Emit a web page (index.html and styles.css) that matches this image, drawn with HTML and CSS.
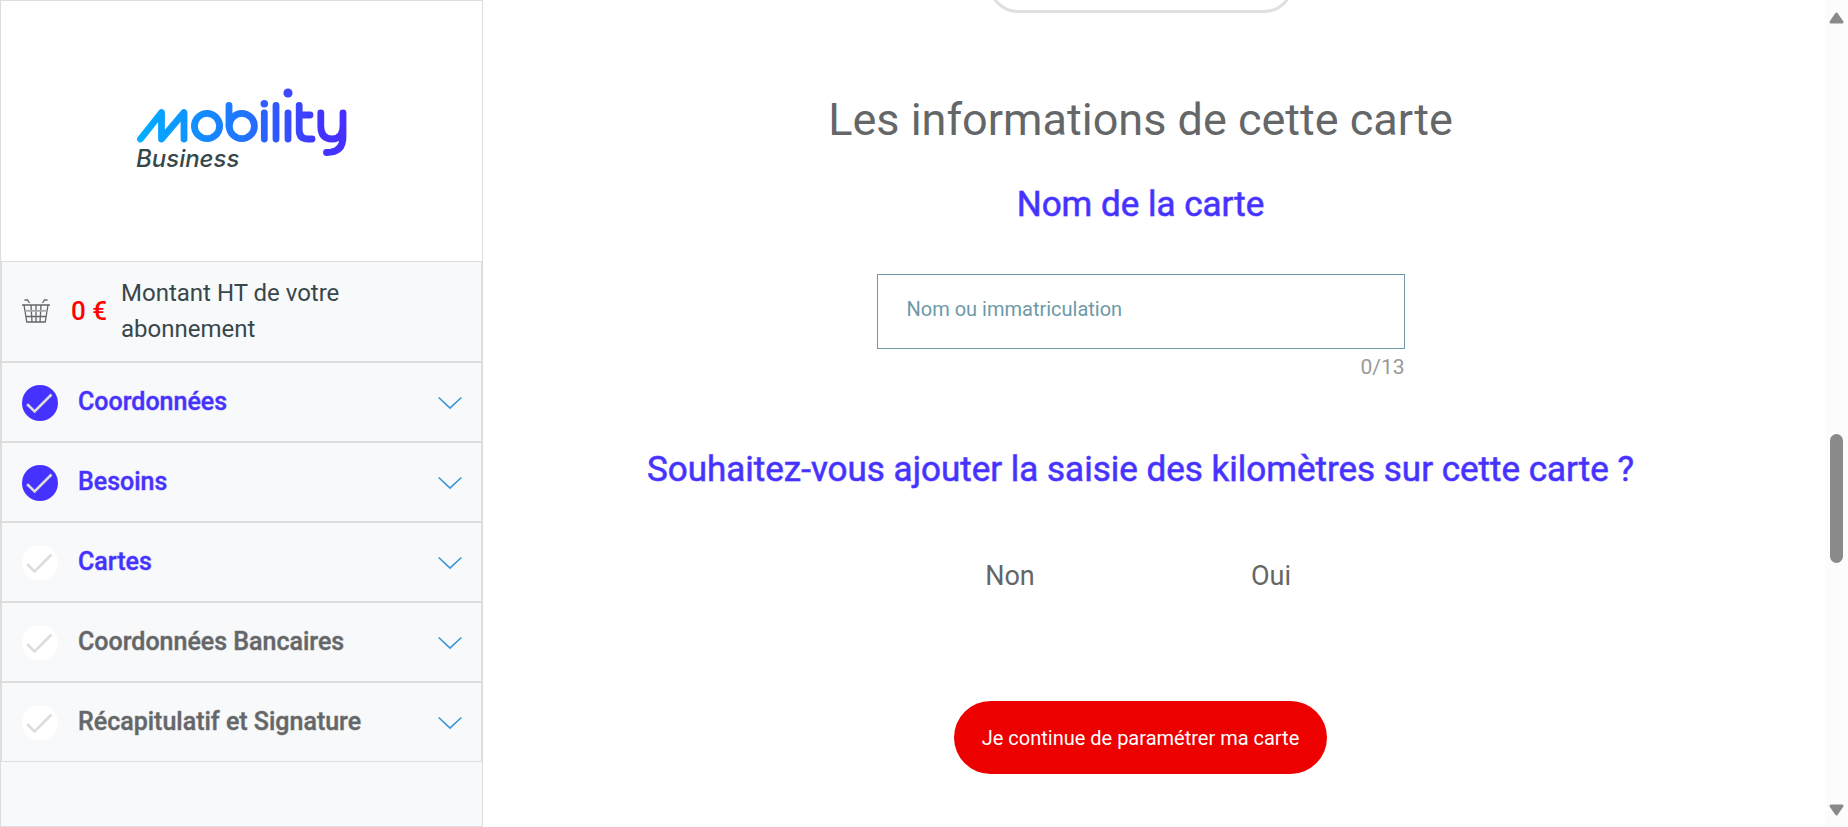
FILE: index.html
```html
<!DOCTYPE html>
<html lang="fr">
<head>
<meta charset="utf-8">
<meta name="viewport" content="width=device-width, initial-scale=1">
<title>Mobility Business</title>
<link rel="stylesheet" href="styles.css">
</head>
<body>
<svg class="defs" aria-hidden="true">
  <defs>
    <symbol id="tick" viewBox="0 0 36 36"><circle class="tick-disc" cx="18" cy="18" r="18"/><path d="M5.2 19.3 12.600 26.500 29.500 9.500" fill="none" stroke="#dcdcdc" stroke-width="2.600"/></symbol>
    <symbol id="chevron" viewBox="0 0 24 14"><path d="M.7 1.500 12 12 23.300 1.500" fill="none" stroke="#3f96d4" stroke-width="1.700"/></symbol>
  </defs>
</svg>
<div class="page">
  <aside class="sidebar">
    <header class="brand">
      <svg class="logo" viewBox="0 0 212 82" role="img" aria-label="Mobility Business">
        <defs><linearGradient id="brand-fill" gradientUnits="userSpaceOnUse" x1="0" y1="0" x2="210" y2="0"><stop offset="0" stop-color="#00b0ff"/><stop offset=".5" stop-color="#1f76ff"/><stop offset=".88" stop-color="#4433ff"/><stop offset="1" stop-color="#4630ff"/></linearGradient></defs>
        <g fill="none" stroke="url(#brand-fill)" stroke-width="6.800" stroke-linecap="round" stroke-linejoin="round">
          <path d="M4.500 52 25.500 25.500V52L48 25.500V52"/>
          <circle cx="71" cy="39" r="12.600"/>
          <path d="M93 18.500V39"/><circle cx="105.800" cy="39" r="12.600"/>
          <path d="M128.300 26V52M140 18.500V52M152 26V52"/>
          <path d="M163.200 18.500V43Q163.200 52 172 52H176M163.200 28H174"/>
          <path d="M184.800 26V39Q184.800 52 196 52Q207 52 207 39M207 26V50Q207 65.500 190.500 65.500"/>
        </g>
        <circle cx="128.300" cy="16.700" r="3.800" fill="#325dff"/><circle cx="152" cy="6" r="4.600" fill="#3f48ff"/>
        <text class="logo-sub" x="0" y="80">Business</text>
      </svg>
    </header>
    <div class="total">
      <svg class="basket" viewBox="0 0 28 24" aria-hidden="true"><g fill="none" stroke="#646667" stroke-width="1.300"><path d="M0 6H28M2.500 1H5.500L7.500 4M25.500 1H22.500L20.500 4M2 6 4.800 23H23.200L26 6M4 17.500H24M9 6 10 23M14 6V23M19 6 18 23"/></g><path d="M3 11.800H25" stroke="#a5a7a9" stroke-width="1.800"/></svg>
      <strong class="amount">0 €</strong>
      <span class="total-label">Montant HT de votre abonnement</span>
    </div>
    <nav class="steps" aria-label="Étapes">
      <button class="step done active" type="button"><svg class="tick"><use href="#tick"/></svg><span class="step-name">Coordonnées</span><svg class="chevron"><use href="#chevron"/></svg></button>
      <button class="step done active" type="button"><svg class="tick"><use href="#tick"/></svg><span class="step-name">Besoins</span><svg class="chevron"><use href="#chevron"/></svg></button>
      <button class="step active" type="button"><svg class="tick"><use href="#tick"/></svg><span class="step-name">Cartes</span><svg class="chevron"><use href="#chevron"/></svg></button>
      <button class="step" type="button"><svg class="tick"><use href="#tick"/></svg><span class="step-name">Coordonnées Bancaires</span><svg class="chevron"><use href="#chevron"/></svg></button>
      <button class="step" type="button"><svg class="tick"><use href="#tick"/></svg><span class="step-name">Récapitulatif et Signature</span><svg class="chevron"><use href="#chevron"/></svg></button>
    </nav>
  </aside>
  <main class="content">
    <div class="previous-card"></div>
    <h1 class="title">Les informations de cette carte</h1>
    <h2 class="question"><label for="card-name">Nom de la carte</label></h2>
    <div class="field">
      <input class="field-input" id="card-name" type="text" maxlength="13" placeholder="Nom ou immatriculation">
      <span class="counter">0/13</span>
    </div>
    <h2 class="question">Souhaitez-vous ajouter la saisie des kilomètres sur cette carte ?</h2>
    <div class="choices">
      <button class="choice" type="button">Non</button>
      <button class="choice" type="button">Oui</button>
    </div>
    <button class="continue" type="button">Je continue de paramétrer ma carte</button>
  </main>
  <div class="scrollbar" aria-hidden="true">
    <svg class="arrow" viewBox="0 0 15 12"><path d="M7.500 2 13 10H2Z" fill="#8a8a8a" stroke="#8a8a8a" stroke-width="3" stroke-linejoin="round"/></svg>
    <div class="track"><div class="thumb"></div></div>
    <svg class="arrow" viewBox="0 0 15 12"><path d="M7.500 10 13 2H2Z" fill="#8a8a8a" stroke="#8a8a8a" stroke-width="3" stroke-linejoin="round"/></svg>
  </div>
</div>
</body>
</html>
```
FILE: styles.css
```css
* { box-sizing: border-box; }
body { margin: 0; font-family: Roboto, "Liberation Sans", sans-serif; color: #646667; background: #fff; }
button, input { font-family: inherit; }
button { border: 0; background: none; cursor: pointer; }
.defs { display: none; }
.page { display: flex; height: 100vh; overflow: hidden; }

.sidebar { flex: none; width: 483px; border: 1px solid #ddd; background: #f8f9fb; }
.brand { display: flex; justify-content: center; padding: 86px 0 92px; background: #fff; }
.logo { width: 212px; height: 82px; overflow: visible; }
.logo-sub { font: italic 500 24px Inter, sans-serif; fill: #37474a; }
.total { display: flex; align-items: center; padding: 13px 20px 14px; border: 1px solid #ddd; font-size: 24px; line-height: 36px; color: #37474a; }
.basket { flex: none; width: 28px; height: 24px; }
.amount { flex: none; margin: 0 14px 0 21px; font-size: 26px; font-weight: 500; color: #f00; }
.total-label { max-width: 260px; }
.step { display: flex; align-items: center; width: 100%; height: 80px; padding: 2px 19px 0 20px; border: 1px solid #ddd; text-align: left; font-size: 25px; font-weight: 500; -webkit-text-stroke: 1px rgb(100 102 103 / 40%); color: #646667; }
.step.active { color: #4632ff; -webkit-text-stroke-color: rgb(70 50 255 / 40%); }
.tick { flex: none; width: 36px; height: 36px; margin-right: 20px; fill: #fff; }
.step.done .tick { fill: #4632ff; }
.step-name { flex: 1; padding-bottom: 3px; }
.chevron { flex: none; width: 24px; height: 14px; }

.content { flex: 1; display: flex; flex-direction: column; align-items: center; padding-right: 27px; }
.previous-card { flex: none; width: 306px; height: 60px; margin-top: -47px; border: 3px solid #e0e0e0; border-radius: 32px; }
.title { margin: 80px 0 0; font-size: 45px; font-weight: 400; line-height: 54px; }
.question { margin: 36px 0 0; font-size: 35px; font-weight: 400; -webkit-text-stroke: 1px rgb(70 50 255 / 60%); line-height: 44px; color: #4632ff; }
.field { display: flex; flex-direction: column; width: 528px; margin: 47px 0 33px; }
.field-input { height: 75px; padding: 0 29px 6px; border: 1px solid #6d99a8; border-radius: 0; background: #fff; font-size: 20px; color: #37474a; }
.field-input::placeholder { color: #6d99a8; opacity: 1; }
.counter { align-self: flex-end; margin-top: 6px; font-size: 21px; line-height: 24px; color: #999; }
.choices { display: grid; grid-template-columns: 261px 261px; margin-top: 44px; }
.choice { height: 80px; font-size: 27px; color: #646667; }
.continue { height: 73px; margin-top: 85px; padding: 0 28px; border-radius: 37px; background: #ed0000; font-size: 20px; color: #fff; }

.scrollbar { flex: none; display: flex; flex-direction: column; align-items: center; width: 23px; padding: 12px 0 11px; background: #fcfcfc; }
.arrow { flex: none; width: 15px; height: 12px; }
.track { flex: 1; padding-top: 410px; }
.thumb { width: 13px; height: 129px; border-radius: 7px; background: #8a8a8a; }
```
